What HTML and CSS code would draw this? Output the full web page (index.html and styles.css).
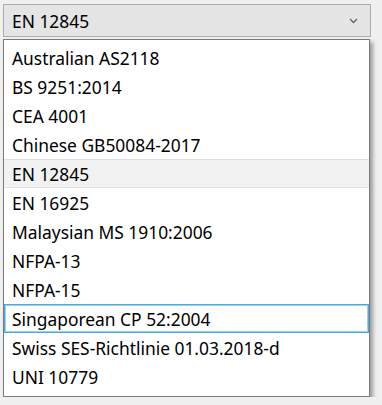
FILE: index.html
```html
<!DOCTYPE html>
<html lang="en">
<head>
  <meta charset="UTF-8">
  <meta name="viewport" content="width=device-width, initial-scale=1.0">
  <title>Standard</title>
  <link rel="stylesheet" href="styles.css">
</head>
<body>
  <div class="panel">
    <div class="combo">
      <span class="combo-value">EN 12845</span>
      <svg class="chevron" width="9" height="6" viewBox="0 0 9 6">
        <path d="M1 1 L4.5 4.5 L8 1" fill="none" stroke="#606060" stroke-width="1.3"/>
      </svg>
    </div>

    <ul class="dropdown">
      <li class="item">Australian AS2118</li>
      <li class="item">BS 9251:2014</li>
      <li class="item">CEA 4001</li>
      <li class="item">Chinese GB50084-2017</li>
      <li class="item selected">EN 12845</li>
      <li class="item">EN 16925</li>
      <li class="item">Malaysian MS 1910:2006</li>
      <li class="item">NFPA-13</li>
      <li class="item">NFPA-15</li>
      <li class="item hover">Singaporean CP 52:2004</li>
      <li class="item">Swiss SES-Richtlinie 01.03.2018-d</li>
      <li class="item">UNI 10779</li>
    </ul>
  </div>
</body>
</html>
```

FILE: styles.css
```css
body {
  margin: 0;
  background-color: #f0f0f0;
  font-family: "Noto Sans", "Open Sans", sans-serif;
  font-size: 17.4px;
  color: #000;
}

.panel {
  padding: 4px 0 0 3px;
}

.combo {
  box-sizing: border-box;
  width: 368px;
  height: 33px;
  display: flex;
  align-items: center;
  justify-content: space-between;
  padding: 0 12px 0 8px;
  background-color: #e5e5e5;
  border: 1px solid #adadad;
}

.chevron {
  display: block;
}

.dropdown {
  box-sizing: border-box;
  list-style: none;
  margin: 2px 0 0 0;
  padding: 3px 0 0 0;
  width: 367px;
  height: 358px;
  background-color: #fff;
  border: 1px solid #7a7a7a;
  box-shadow: 3px 3px 4px rgba(0, 0, 0, 0.35);
}

.item {
  box-sizing: border-box;
  height: 29px;
  display: flex;
  align-items: center;
  padding-left: 7px;
  border: 1px solid transparent;
  white-space: nowrap;
}

.item.selected {
  background-color: #f2f2f2;
  border-top-color: #e0e0e0;
  border-bottom-color: #e0e0e0;
}

.item.hover {
  border: 1px solid #4ca6e0;
  box-shadow: inset 0 0 0 1px #9ed0f0;
}
```
